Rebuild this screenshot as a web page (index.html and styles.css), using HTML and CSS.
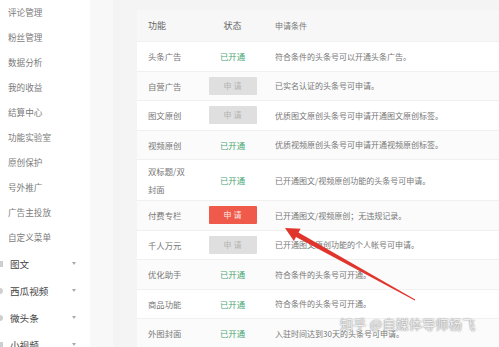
FILE: index.html
```html
<!DOCTYPE html>
<html lang="zh">
<head>
<meta charset="utf-8">
<link rel="stylesheet" href="styles.css">
</head>
<body>
<div class="page">
  <aside class="sidebar">
    <div class="nav-item">评论管理</div>
    <div class="nav-item">粉丝管理</div>
    <div class="nav-item">数据分析</div>
    <div class="nav-item">我的收益</div>
    <div class="nav-item">结算中心</div>
    <div class="nav-item">功能实验室</div>
    <div class="nav-item">原创保护</div>
    <div class="nav-item">号外推广</div>
    <div class="nav-item">广告主投放</div>
    <div class="nav-item">自定义菜单</div>
    <div class="nav-group"><span class="gicon square"></span><span class="gname">图文</span><span class="caret"></span></div>
    <div class="nav-group"><span class="gicon round"></span><span class="gname">西瓜视频</span><span class="caret"></span></div>
    <div class="nav-group"><span class="gicon round"></span><span class="gname">微头条</span><span class="caret"></span></div>
    <div class="nav-group"><span class="gicon square"></span><span class="gname">小视频</span><span class="caret"></span></div>
  </aside>
  <div class="strip"></div>
  <main class="main">
    <div class="table">
      <div class="row head"><div class="c1">功能</div><div class="c2">状态</div><div class="c3">申请条件</div></div>
      <div class="row"><div class="c1">头条广告</div><div class="c2"><span class="on">已开通</span></div><div class="c3">符合条件的头条号可以开通头条广告。</div></div>
      <div class="row alt"><div class="c1">自营广告</div><div class="c2"><span class="btn">申 请</span></div><div class="c3">已实名认证的头条号可申请。</div></div>
      <div class="row"><div class="c1">图文原创</div><div class="c2"><span class="btn">申 请</span></div><div class="c3">优质图文原创头条号可申请开通图文原创标签。</div></div>
      <div class="row alt"><div class="c1">视频原创</div><div class="c2"><span class="on">已开通</span></div><div class="c3">优质视频原创头条号可申请开通视频原创标签。</div></div>
      <div class="row tall"><div class="c1 wrap">双标题/双封面</div><div class="c2"><span class="on">已开通</span></div><div class="c3">已开通图文/视频原创功能的头条号可申请。</div></div>
      <div class="row alt"><div class="c1">付费专栏</div><div class="c2"><span class="btn red">申 请</span></div><div class="c3">已开通图文/视频原创；无违规记录。</div></div>
      <div class="row"><div class="c1">千人万元</div><div class="c2"><span class="btn">申 请</span></div><div class="c3">已开通图文原创功能的个人帐号可申请。</div></div>
      <div class="row alt"><div class="c1">优化助手</div><div class="c2"><span class="on">已开通</span></div><div class="c3">符合条件的头条号可开通。</div></div>
      <div class="row"><div class="c1">商品功能</div><div class="c2"><span class="on">已开通</span></div><div class="c3">符合条件的头条号可开通。</div></div>
      <div class="row alt"><div class="c1">外图封面</div><div class="c2"><span class="on">已开通</span></div><div class="c3">入驻时间达到30天的头条号可申请。</div></div>
    </div>
  </main>
</div>
<svg class="arrow" width="499" height="347" viewBox="0 0 499 347">
  <polygon points="285,228 300.6,228.7 298.5,232.6 415.2,299.6 414.8,300.4 296,237 293.9,240.9" fill="#e0352c"/>
</svg>
<div class="watermark">知乎 @自媒体导师杨飞</div>
</body>
</html>
```
FILE: styles.css
```css
html, body {
  margin: 0;
  padding: 0;
}
body {
  width: 499px;
  height: 347px;
  overflow: hidden;
  position: relative;
  font-family: "Noto Sans CJK SC", "Noto Sans", sans-serif;
  background: #f4f4f4;
}
.page {
  display: flex;
  height: 347px;
}
.sidebar {
  width: 90px;
  flex: none;
  background: #fff;
}
.nav-item {
  height: 25px;
  line-height: 25px;
  padding-left: 8px;
  font-size: 8.6px;
  color: #7a7a7a;
}
.nav-group {
  height: 27px;
  display: flex;
  align-items: center;
}
.gicon {
  width: 6px;
  height: 6px;
  margin-left: -3px;
  background: #cfcfcf;
  flex: none;
}
.gicon.round {
  border-radius: 50%;
}
.gname {
  margin-left: 7px;
  font-size: 9.6px;
  color: #444;
  width: 62px;
}
.caret {
  width: 0;
  height: 0;
  border-left: 2.5px solid transparent;
  border-right: 2.5px solid transparent;
  border-top: 3px solid #aaa;
}
.strip {
  width: 23px;
  flex: none;
  background: #f8f8f8;
}
.main {
  flex: 1;
  padding: 10px 0 0 24px;
  overflow: hidden;
}
.table {
  width: 420px;
  background: #fff;
}
.row {
  display: grid;
  grid-template-columns: 58px 75px 1fr;
  align-items: center;
  height: 29.5px;
  border-bottom: 1px solid #f0f0f0;
  box-sizing: border-box;
  font-size: 8.4px;
  color: #777;
  white-space: nowrap;
}
.row.alt {
  background: #fbfbfb;
}
.row.head {
  height: 32px;
  background: #f7f7f7;
  color: #666;
  font-size: 9px;
}
.row.tall {
  height: 41px;
}
.c1 {
  padding-left: 11px;
}
.c1.wrap {
  white-space: normal;
  line-height: 18px;
  padding-right: 4px;
}
.c2 {
  display: flex;
  justify-content: center;
}
.c3 {
  padding-left: 5px;
  color: #777;
  font-size: 8px;
}
.on {
  color: #4aa676;
}
.btn {
  display: block;
  width: 48px;
  height: 18px;
  line-height: 18px;
  text-align: center;
  background: #dfdfdf;
  color: #b4b4b4;
  border-radius: 1px;
  font-size: 8px;
}
.btn.red {
  background: #ef5a4a;
  color: #fde6e2;
}
.arrow {
  position: absolute;
  left: 0;
  top: 0;
}
.watermark {
  position: absolute;
  left: 340px;
  top: 314px;
  font-size: 13px;
  color: rgba(255, 255, 255, 0.85);
  text-shadow: 0 0 1px #888, 0 0 2px #999;
  letter-spacing: 0.3px;
  white-space: nowrap;
}
```
